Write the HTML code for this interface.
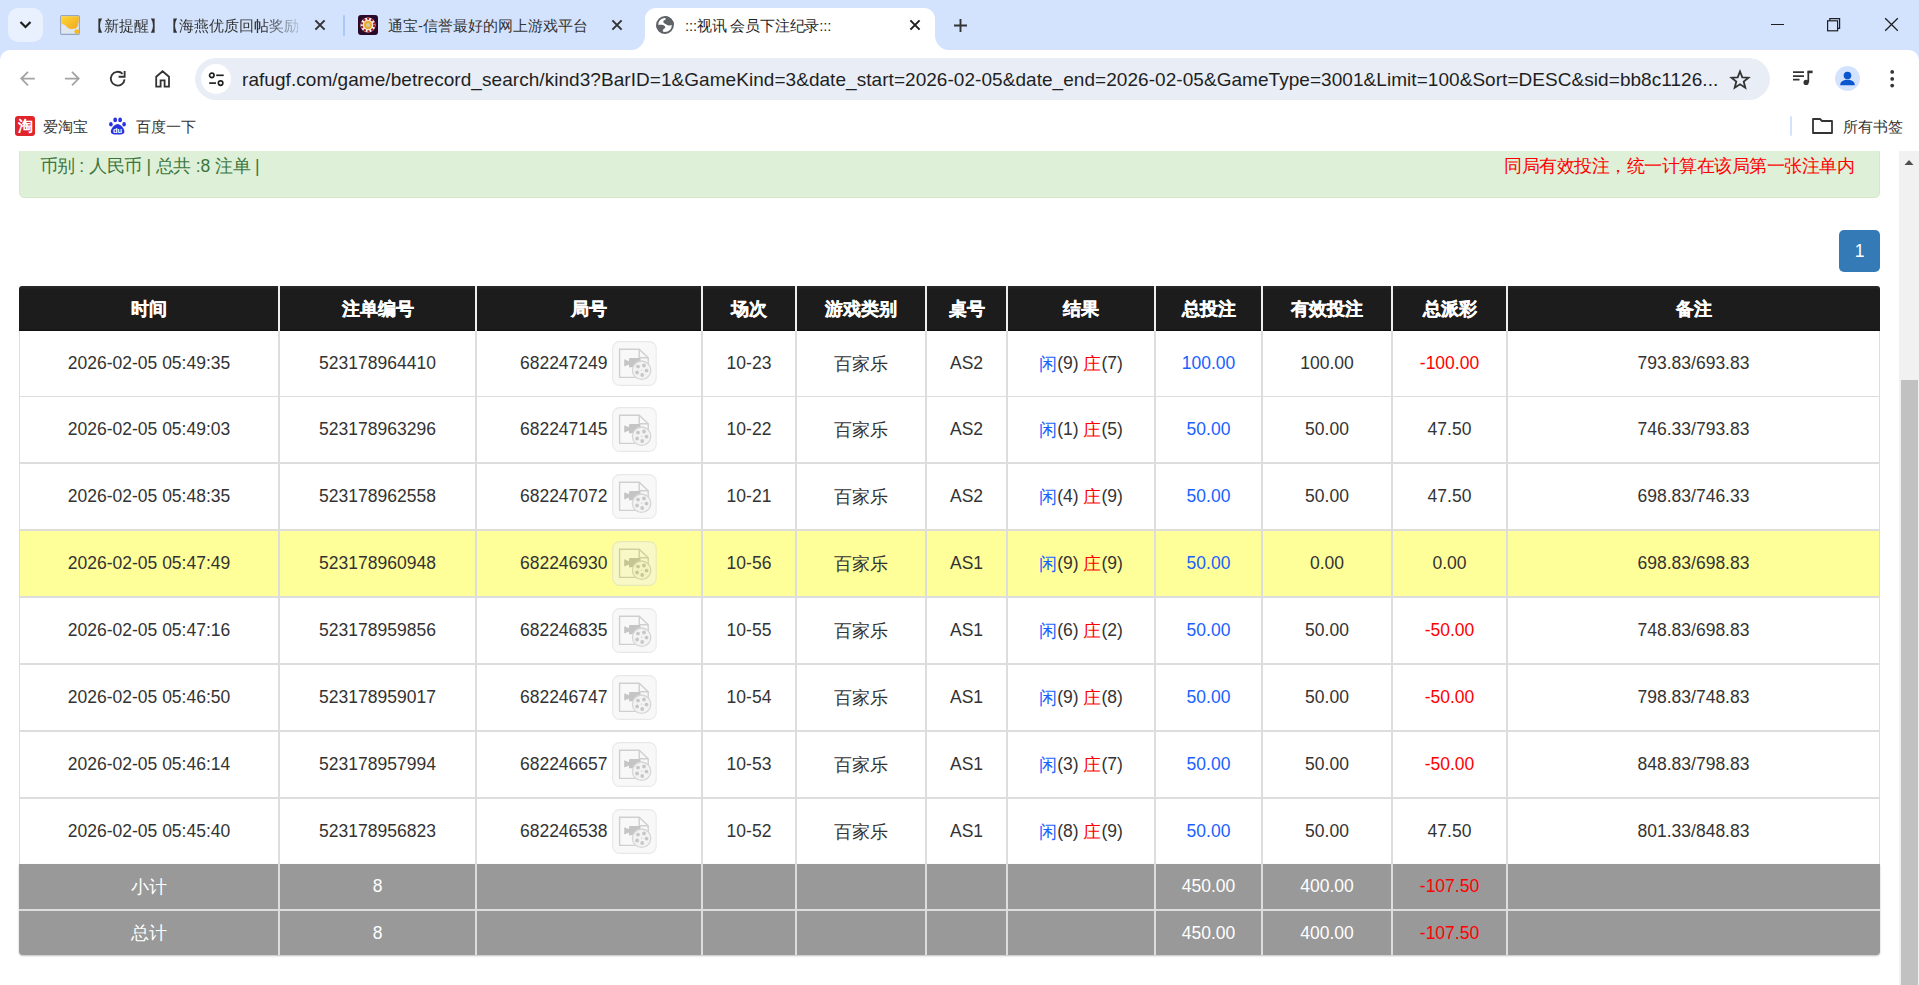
<!DOCTYPE html><html><head><meta charset="utf-8"><style>
*{margin:0;padding:0;box-sizing:border-box}
html,body{width:1919px;height:985px;overflow:hidden;background:#fff;font-family:"Liberation Sans", sans-serif;position:relative}
.a{position:absolute}
.c{position:absolute;display:flex;align-items:center;justify-content:center;white-space:nowrap}
.tab-title{font-size:15px;color:#1f1f1f}
.pg{font-size:17.5px;color:#333}
.b{color:#1a5fff}
.r{color:#f00}
.cj{letter-spacing:-0.5px}
</style></head><body><div class="a" style="left:0;top:0;width:1919px;height:62px;background:#d3e3fd"></div><div class="a" style="left:0;top:50px;width:1919px;height:101px;background:#fff;border-radius:10px 10px 0 0"></div>
<div class="a" style="left:8px;top:8px;width:35px;height:34px;border-radius:10px;background:#e9f1fe"></div>
<svg class="a" style="left:15px;top:14px" width="22" height="22" viewBox="0 0 22 22"><path d="M5.5 8 L10.5 13 L15.5 8" fill="none" stroke="#1f1f1f" stroke-width="2.2"/></svg>
<svg class="a" style="left:60px;top:15px" width="20" height="20" viewBox="0 0 20 20"><defs><linearGradient id="yg" x1="0" y1="0" x2="1" y2="1"><stop offset="0" stop-color="#fdd835"/><stop offset="1" stop-color="#f2a621"/></linearGradient></defs><rect x="0.6" y="0.6" width="18.8" height="18.8" rx="1.2" fill="#dfe6f0" stroke="#93a6c4" stroke-width="1.1"/><path d="M1.2 1.2H18.8V6.5C18.4 8 17.8 9.5 17.6 11C17 13.3 14 14.3 11 14C8 13.7 7 12 5.8 10.8C4.5 9.6 2.5 9.2 1.2 8Z" fill="url(#yg)"/><circle cx="16.8" cy="16.6" r="2.4" fill="#f7b81c"/></svg>
<div class="a tab-title" style="left:89px;top:16.5px;width:218px;overflow:hidden;white-space:nowrap;color:#333;-webkit-mask-image:linear-gradient(90deg,#000 80%,transparent 100%)">【新提醒】【海燕优质回帖奖励</div>
<svg class="a" style="left:314px;top:19px" width="12" height="12" viewBox="0 0 12 12"><path d="M1.4 1.4L10.6 10.6M10.6 1.4L1.4 10.6" stroke="#333" stroke-width="2"/></svg>
<div class="a" style="left:343px;top:15px;width:2px;height:21px;border-radius:1px;background:#a8c7fa"></div>
<svg class="a" style="left:358px;top:15px" width="20" height="20" viewBox="0 0 20 20"><rect x="0" y="0" width="20" height="20" rx="3" fill="#2a0a28"/><circle cx="10" cy="10" r="7.6" fill="#f4eee6"/><g stroke="#a11d2b" stroke-width="2.2" stroke-dasharray="2.2 1.8"><circle cx="10" cy="10" r="6.3" fill="none"/></g><circle cx="10" cy="10" r="4.2" fill="#e5ae2e"/><circle cx="10" cy="10" r="2" fill="#d9c9a8"/></svg>
<div class="a tab-title" style="left:388px;top:16.5px;white-space:nowrap;color:#333">通宝-信誉最好的网上游戏平台</div>
<svg class="a" style="left:611px;top:19px" width="12" height="12" viewBox="0 0 12 12"><path d="M1.4 1.4L10.6 10.6M10.6 1.4L1.4 10.6" stroke="#333" stroke-width="2"/></svg>
<svg class="a" style="left:630px;top:7.5px" width="335" height="43" viewBox="0 0 335 43"><path d="M0 42.5A15 15 0 0 0 15 27.5V11A11 11 0 0 1 26 0H294A11 11 0 0 1 305 11V27.5A15 15 0 0 0 320 42.5V43H0Z" fill="#fff"/></svg>
<svg class="a" style="left:652px;top:12px" width="26" height="26" viewBox="0 0 26 26"><defs><clipPath id="gc"><circle cx="13" cy="13" r="8.9"/></clipPath></defs><circle cx="13" cy="13" r="7.9" fill="#fff" stroke="#5f6368" stroke-width="2"/><g clip-path="url(#gc)" fill="#5f6368"><path d="M12.4 3.5C13.8 5.5 14.4 7.4 12.8 8C11 8.6 10.8 10.4 12.2 11.2C13.8 12 15 12.7 16.3 13.4C17.6 13.9 19.5 13.2 22.5 12.5L22.5 3.5Z"/><path d="M3.5 13C7 12.8 10 12.6 11.6 13.3C13.6 14.2 13.8 15.8 12.3 16.5C10.9 17.1 10.5 18.8 11 22.5L3.5 22.5Z"/></g></svg>
<div class="a tab-title" style="left:685px;top:16.5px;letter-spacing:-0.2px;white-space:nowrap;color:#1f1f1f">:::视讯 会员下注纪录:::</div>
<svg class="a" style="left:909px;top:19px" width="12" height="12" viewBox="0 0 12 12"><path d="M1.4 1.4L10.6 10.6M10.6 1.4L1.4 10.6" stroke="#1f1f1f" stroke-width="2"/></svg>
<svg class="a" style="left:953px;top:18px" width="15" height="15" viewBox="0 0 15 15"><path d="M7.5 1V14M1 7.5H14" stroke="#333" stroke-width="1.9"/></svg>
<div class="a" style="left:1771px;top:24px;width:13px;height:1.3px;background:#1f1f1f"></div>
<svg class="a" style="left:1825px;top:16px" width="17" height="17" viewBox="0 0 17 17"><rect x="2.6" y="4.8" width="10" height="10" fill="none" stroke="#1f1f1f" stroke-width="1.2"/><path d="M4.8 4.8V2.6H14.6V12.4H12.6" fill="none" stroke="#1f1f1f" stroke-width="1.2"/></svg>
<svg class="a" style="left:1882px;top:16px" width="18" height="18" viewBox="0 0 18 18"><path d="M3.2 2.2L15.8 14.8M15.8 2.2L3.2 14.8" stroke="#1f1f1f" stroke-width="1.3"/></svg>
<svg class="a" style="left:18px;top:68px" width="20" height="20" viewBox="0 0 20 20"><path d="M16.9 10.6H3.6M10 3.8L3.3 10.6L10 17.4" fill="none" stroke="#a4a4a4" stroke-width="1.8"/></svg>
<svg class="a" style="left:63px;top:68px" width="20" height="20" viewBox="0 0 20 20"><path d="M2 10.6H15.4M9 3.8L15.7 10.6L9 17.4" fill="none" stroke="#a4a4a4" stroke-width="1.8"/></svg>
<svg class="a" style="left:107px;top:69px" width="20" height="20" viewBox="0 0 20 20"><path d="M17.57 10.3A6.9 6.9 0 1 1 15.6 4.8" fill="none" stroke="#333" stroke-width="1.85"/><path d="M11.6 7.75H17.65V2" fill="none" stroke="#333" stroke-width="1.85"/></svg>
<svg class="a" style="left:152px;top:68px" width="22" height="22" viewBox="0 0 22 22"><path d="M4.2 18.6V8.7L10.6 3.2L17 8.7V18.6H12.6V12.4H8.6V18.6Z" fill="none" stroke="#333" stroke-width="1.8"/></svg>
<div class="a" style="left:195px;top:58px;width:1575px;height:42px;border-radius:21px;background:#e9eef6"></div>
<div class="a" style="left:201px;top:64px;width:30px;height:30px;border-radius:15px;background:#fff"></div>
<svg class="a" style="left:206px;top:69px" width="22" height="22" viewBox="0 0 22 22"><circle cx="5.8" cy="6.3" r="2.25" fill="none" stroke="#1f1f1f" stroke-width="1.65"/><path d="M10.2 6.3H17.7" stroke="#1f1f1f" stroke-width="1.65"/><circle cx="14.6" cy="14.1" r="2.25" fill="none" stroke="#1f1f1f" stroke-width="1.65"/><path d="M3.2 14.1H10" stroke="#1f1f1f" stroke-width="1.65"/></svg>
<div class="a" style="left:242px;top:69px;font-size:19px;letter-spacing:0.05px;color:#1f1f1f;white-space:nowrap">rafugf.com/game/betrecord_search/kind3?BarID=1&amp;GameKind=3&amp;date_start=2026-02-05&amp;date_end=2026-02-05&amp;GameType=3001&amp;Limit=100&amp;Sort=DESC&amp;sid=bb8c1126...</div>
<svg class="a" style="left:1729px;top:69px" width="22" height="22" viewBox="0 0 22 22"><path d="M11 2.5L13.3 8.3L19.5 8.7L14.7 12.6L16.3 18.7L11 15.3L5.7 18.7L7.3 12.6L2.5 8.7L8.7 8.3Z" fill="none" stroke="#333" stroke-width="1.8" stroke-linejoin="miter"/></svg>
<svg class="a" style="left:1792px;top:68px" width="24" height="20" viewBox="0 0 24 20"><path d="M1 4.2H12M1 8H12M1 11.7H7.5" stroke="#333" stroke-width="1.75"/><path d="M16.3 3.4V14.3" stroke="#333" stroke-width="1.75"/><path d="M15.5 2.6H20.6V5.2H15.5Z" fill="#333"/><circle cx="14.1" cy="14.4" r="2.6" fill="#333"/></svg>
<div class="a" style="left:1835px;top:66px;width:25px;height:25px;border-radius:13px;background:#d3e3fd"></div>
<svg class="a" style="left:1837px;top:68px" width="21" height="21" viewBox="0 0 21 21"><circle cx="10.5" cy="7.5" r="3.8" fill="#0b57d0"/><path d="M3.2 17.2C3.2 13.2 7 11.8 10.5 11.8C14 11.8 17.8 13.2 17.8 17.2Z" fill="#0b57d0"/></svg>
<svg class="a" style="left:1886px;top:68px" width="12" height="22" viewBox="0 0 12 22"><circle cx="6.2" cy="3.9" r="1.85" fill="#333"/><circle cx="6.2" cy="10.9" r="1.85" fill="#333"/><circle cx="6.2" cy="17.6" r="1.85" fill="#333"/></svg>
<div class="a" style="left:15px;top:116px;width:20px;height:20px;border-radius:3px;background:#e0242c;color:#fff;font-size:15px;font-weight:bold;line-height:20px;text-align:center">淘</div>
<div class="a tab-title" style="left:43px;top:117.5px;color:#333">爱淘宝</div>
<svg class="a" style="left:109px;top:116px" width="18" height="20" viewBox="0 0 18 20"><ellipse cx="6.2" cy="3.9" rx="1.9" ry="2.4" fill="#2932e1"/><ellipse cx="11.1" cy="3.9" rx="1.9" ry="2.4" fill="#2932e1"/><ellipse cx="1.9" cy="8.2" rx="1.8" ry="2.3" fill="#2932e1"/><ellipse cx="15.1" cy="8.2" rx="1.8" ry="2.3" fill="#2932e1"/><path d="M8.6 8C6 8 1.8 12.4 1.8 15.4C1.8 17.8 4 18.6 8.6 18.6C13.2 18.6 15.4 17.8 15.4 15.4C15.4 12.4 11.2 8 8.6 8Z" fill="#2932e1"/><text x="8.6" y="16.9" font-size="7.5" font-family="Liberation Sans" fill="#fff" text-anchor="middle" font-weight="bold">du</text></svg>
<div class="a tab-title" style="left:135.5px;top:117.5px;color:#333">百度一下</div>
<div class="a" style="left:1790px;top:116px;width:2px;height:20px;border-radius:1px;background:#d3e3fd"></div>
<svg class="a" style="left:1811px;top:116px" width="24" height="20" viewBox="0 0 24 20"><path d="M2 3H9L11 5H21V17H2Z" fill="none" stroke="#333" stroke-width="1.8" stroke-linejoin="round"/></svg>
<div class="a tab-title" style="left:1842.5px;top:117.5px;color:#333">所有书签</div>
<div class="a" style="left:0;top:151px;width:1899px;height:834px;overflow:hidden">
<div class="a" style="left:19px;top:-20px;width:1861px;height:67px;background:#dff0d8;border:1px solid #d6e9c6;border-radius:5px"></div>
<div class="a pg" style="left:39.5px;top:3px;color:#3c763d"><span class="cj">币别</span> : <span class="cj">人民币</span> | <span class="cj">总共</span> :8 <span class="cj">注单</span> |</div>
<div class="a pg cj" style="right:45px;top:3px;color:#f00">同局有效投注，统一计算在该局第一张注单内</div>
<div class="c" style="left:1839px;top:79px;width:41px;height:42px;border-radius:5px;background:#337ab7;color:#fff;font-size:17.5px">1</div>
</div>
<div class="a" style="left:19px;top:286px;width:1861px;height:45px;background:linear-gradient(#2a2a2a 0,#1c1c1c 4px,#1c1c1c 43px,#0e0e0e 45px);border-radius:3px 3px 0 0"></div>
<div class="c" style="left:20px;top:286px;width:258px;height:45px;color:#fff;font-weight:bold;font-size:17.5px;-webkit-text-stroke:0.35px #fff">时间</div>
<div class="c" style="left:280px;top:286px;width:195px;height:45px;color:#fff;font-weight:bold;font-size:17.5px;-webkit-text-stroke:0.35px #fff">注单编号</div>
<div class="c" style="left:477px;top:286px;width:224px;height:45px;color:#fff;font-weight:bold;font-size:17.5px;-webkit-text-stroke:0.35px #fff">局号</div>
<div class="c" style="left:703px;top:286px;width:92px;height:45px;color:#fff;font-weight:bold;font-size:17.5px;-webkit-text-stroke:0.35px #fff">场次</div>
<div class="c" style="left:797px;top:286px;width:128px;height:45px;color:#fff;font-weight:bold;font-size:17.5px;-webkit-text-stroke:0.35px #fff">游戏类别</div>
<div class="c" style="left:927px;top:286px;width:79px;height:45px;color:#fff;font-weight:bold;font-size:17.5px;-webkit-text-stroke:0.35px #fff">桌号</div>
<div class="c" style="left:1008px;top:286px;width:146px;height:45px;color:#fff;font-weight:bold;font-size:17.5px;-webkit-text-stroke:0.35px #fff">结果</div>
<div class="c" style="left:1156px;top:286px;width:105px;height:45px;color:#fff;font-weight:bold;font-size:17.5px;-webkit-text-stroke:0.35px #fff">总投注</div>
<div class="c" style="left:1263px;top:286px;width:128px;height:45px;color:#fff;font-weight:bold;font-size:17.5px;-webkit-text-stroke:0.35px #fff">有效投注</div>
<div class="c" style="left:1393px;top:286px;width:113px;height:45px;color:#fff;font-weight:bold;font-size:17.5px;-webkit-text-stroke:0.35px #fff">总派彩</div>
<div class="c" style="left:1508px;top:286px;width:371px;height:45px;color:#fff;font-weight:bold;font-size:17.5px;-webkit-text-stroke:0.35px #fff">备注</div>
<div class="a" style="left:19px;top:331px;width:1861px;height:65px;background:#fff"></div>
<div class="c pg" style="left:20px;top:331px;width:258px;height:65px;">2026-02-05 05:49:35</div>
<div class="c pg" style="left:280px;top:331px;width:195px;height:65px;">523178964410</div>
<div class="c pg" style="left:477px;top:331px;width:224px;height:65px;padding-right:1px">682247249<svg width="45" height="45" viewBox="0 0 45 45" style="margin-left:4.5px;flex:none;opacity:0.5"><rect x="0.6" y="0.6" width="43.6" height="43.8" rx="7" fill="#f3f3f3" stroke="#d3d3d3" stroke-width="1.1"/><path d="M23 36.4H7.6V8.2H27.2L36.2 16.8V23" fill="none" stroke="#a1a1a1" stroke-width="1.4"/><path d="M27.2 8.2V16.8H36.2" fill="none" stroke="#a1a1a1" stroke-width="1.4"/><path d="M17 18.2Q17 17 18.2 17H27.3Q28.5 17 28.5 18.2V26.3H17Z" fill="#8d8d8d"/><path d="M12.2 18.2L17.2 20.2V23.5L12.2 25.5Z" fill="#8d8d8d"/><circle cx="29.6" cy="29.2" r="9.2" fill="#e9e9e9" stroke="#adadad" stroke-width="1.3"/><circle cx="26" cy="25.6" r="1.9" fill="#919191"/><circle cx="32" cy="24.5" r="1.9" fill="#919191"/><circle cx="34.5" cy="29.6" r="1.9" fill="#919191"/><circle cx="30.2" cy="34" r="1.9" fill="#919191"/><circle cx="25.1" cy="31.5" r="1.9" fill="#919191"/><circle cx="29.6" cy="29.2" r="0.6" fill="#919191"/></svg></div>
<div class="c pg" style="left:703px;top:331px;width:92px;height:65px;">10-23</div>
<div class="c pg" style="left:797px;top:331px;width:128px;height:65px;">百家乐</div>
<div class="c pg" style="left:927px;top:331px;width:79px;height:65px;">AS2</div>
<div class="c pg" style="left:1008px;top:331px;width:146px;height:65px;"><span class="b">闲</span>(9)&nbsp;<span class="r">庄</span>(7)</div>
<div class="c pg" style="left:1156px;top:331px;width:105px;height:65px;color:#1a5fff">100.00</div>
<div class="c pg" style="left:1263px;top:331px;width:128px;height:65px;">100.00</div>
<div class="c pg" style="left:1393px;top:331px;width:113px;height:65px;color:#f00">-100.00</div>
<div class="c pg" style="left:1508px;top:331px;width:371px;height:65px;">793.83/693.83</div>
<div class="a" style="left:19px;top:396px;width:1861px;height:1px;background:#ddd"></div>
<div class="a" style="left:19px;top:397px;width:1861px;height:65px;background:#fff"></div>
<div class="c pg" style="left:20px;top:397px;width:258px;height:65px;">2026-02-05 05:49:03</div>
<div class="c pg" style="left:280px;top:397px;width:195px;height:65px;">523178963296</div>
<div class="c pg" style="left:477px;top:397px;width:224px;height:65px;padding-right:1px">682247145<svg width="45" height="45" viewBox="0 0 45 45" style="margin-left:4.5px;flex:none;opacity:0.5"><rect x="0.6" y="0.6" width="43.6" height="43.8" rx="7" fill="#f3f3f3" stroke="#d3d3d3" stroke-width="1.1"/><path d="M23 36.4H7.6V8.2H27.2L36.2 16.8V23" fill="none" stroke="#a1a1a1" stroke-width="1.4"/><path d="M27.2 8.2V16.8H36.2" fill="none" stroke="#a1a1a1" stroke-width="1.4"/><path d="M17 18.2Q17 17 18.2 17H27.3Q28.5 17 28.5 18.2V26.3H17Z" fill="#8d8d8d"/><path d="M12.2 18.2L17.2 20.2V23.5L12.2 25.5Z" fill="#8d8d8d"/><circle cx="29.6" cy="29.2" r="9.2" fill="#e9e9e9" stroke="#adadad" stroke-width="1.3"/><circle cx="26" cy="25.6" r="1.9" fill="#919191"/><circle cx="32" cy="24.5" r="1.9" fill="#919191"/><circle cx="34.5" cy="29.6" r="1.9" fill="#919191"/><circle cx="30.2" cy="34" r="1.9" fill="#919191"/><circle cx="25.1" cy="31.5" r="1.9" fill="#919191"/><circle cx="29.6" cy="29.2" r="0.6" fill="#919191"/></svg></div>
<div class="c pg" style="left:703px;top:397px;width:92px;height:65px;">10-22</div>
<div class="c pg" style="left:797px;top:397px;width:128px;height:65px;">百家乐</div>
<div class="c pg" style="left:927px;top:397px;width:79px;height:65px;">AS2</div>
<div class="c pg" style="left:1008px;top:397px;width:146px;height:65px;"><span class="b">闲</span>(1)&nbsp;<span class="r">庄</span>(5)</div>
<div class="c pg" style="left:1156px;top:397px;width:105px;height:65px;color:#1a5fff">50.00</div>
<div class="c pg" style="left:1263px;top:397px;width:128px;height:65px;">50.00</div>
<div class="c pg" style="left:1393px;top:397px;width:113px;height:65px;">47.50</div>
<div class="c pg" style="left:1508px;top:397px;width:371px;height:65px;">746.33/793.83</div>
<div class="a" style="left:19px;top:462px;width:1861px;height:2px;background:#ddd"></div>
<div class="a" style="left:19px;top:464px;width:1861px;height:65px;background:#fff"></div>
<div class="c pg" style="left:20px;top:464px;width:258px;height:65px;">2026-02-05 05:48:35</div>
<div class="c pg" style="left:280px;top:464px;width:195px;height:65px;">523178962558</div>
<div class="c pg" style="left:477px;top:464px;width:224px;height:65px;padding-right:1px">682247072<svg width="45" height="45" viewBox="0 0 45 45" style="margin-left:4.5px;flex:none;opacity:0.5"><rect x="0.6" y="0.6" width="43.6" height="43.8" rx="7" fill="#f3f3f3" stroke="#d3d3d3" stroke-width="1.1"/><path d="M23 36.4H7.6V8.2H27.2L36.2 16.8V23" fill="none" stroke="#a1a1a1" stroke-width="1.4"/><path d="M27.2 8.2V16.8H36.2" fill="none" stroke="#a1a1a1" stroke-width="1.4"/><path d="M17 18.2Q17 17 18.2 17H27.3Q28.5 17 28.5 18.2V26.3H17Z" fill="#8d8d8d"/><path d="M12.2 18.2L17.2 20.2V23.5L12.2 25.5Z" fill="#8d8d8d"/><circle cx="29.6" cy="29.2" r="9.2" fill="#e9e9e9" stroke="#adadad" stroke-width="1.3"/><circle cx="26" cy="25.6" r="1.9" fill="#919191"/><circle cx="32" cy="24.5" r="1.9" fill="#919191"/><circle cx="34.5" cy="29.6" r="1.9" fill="#919191"/><circle cx="30.2" cy="34" r="1.9" fill="#919191"/><circle cx="25.1" cy="31.5" r="1.9" fill="#919191"/><circle cx="29.6" cy="29.2" r="0.6" fill="#919191"/></svg></div>
<div class="c pg" style="left:703px;top:464px;width:92px;height:65px;">10-21</div>
<div class="c pg" style="left:797px;top:464px;width:128px;height:65px;">百家乐</div>
<div class="c pg" style="left:927px;top:464px;width:79px;height:65px;">AS2</div>
<div class="c pg" style="left:1008px;top:464px;width:146px;height:65px;"><span class="b">闲</span>(4)&nbsp;<span class="r">庄</span>(9)</div>
<div class="c pg" style="left:1156px;top:464px;width:105px;height:65px;color:#1a5fff">50.00</div>
<div class="c pg" style="left:1263px;top:464px;width:128px;height:65px;">50.00</div>
<div class="c pg" style="left:1393px;top:464px;width:113px;height:65px;">47.50</div>
<div class="c pg" style="left:1508px;top:464px;width:371px;height:65px;">698.83/746.33</div>
<div class="a" style="left:19px;top:529px;width:1861px;height:2px;background:#ddd"></div>
<div class="a" style="left:19px;top:531px;width:1861px;height:65px;background:#ffff99"></div>
<div class="c pg" style="left:20px;top:531px;width:258px;height:65px;">2026-02-05 05:47:49</div>
<div class="c pg" style="left:280px;top:531px;width:195px;height:65px;">523178960948</div>
<div class="c pg" style="left:477px;top:531px;width:224px;height:65px;padding-right:1px">682246930<svg width="45" height="45" viewBox="0 0 45 45" style="margin-left:4.5px;flex:none;opacity:0.5"><rect x="0.6" y="0.6" width="43.6" height="43.8" rx="7" fill="#f3f3f3" stroke="#d3d3d3" stroke-width="1.1"/><path d="M23 36.4H7.6V8.2H27.2L36.2 16.8V23" fill="none" stroke="#a1a1a1" stroke-width="1.4"/><path d="M27.2 8.2V16.8H36.2" fill="none" stroke="#a1a1a1" stroke-width="1.4"/><path d="M17 18.2Q17 17 18.2 17H27.3Q28.5 17 28.5 18.2V26.3H17Z" fill="#8d8d8d"/><path d="M12.2 18.2L17.2 20.2V23.5L12.2 25.5Z" fill="#8d8d8d"/><circle cx="29.6" cy="29.2" r="9.2" fill="#e9e9e9" stroke="#adadad" stroke-width="1.3"/><circle cx="26" cy="25.6" r="1.9" fill="#919191"/><circle cx="32" cy="24.5" r="1.9" fill="#919191"/><circle cx="34.5" cy="29.6" r="1.9" fill="#919191"/><circle cx="30.2" cy="34" r="1.9" fill="#919191"/><circle cx="25.1" cy="31.5" r="1.9" fill="#919191"/><circle cx="29.6" cy="29.2" r="0.6" fill="#919191"/></svg></div>
<div class="c pg" style="left:703px;top:531px;width:92px;height:65px;">10-56</div>
<div class="c pg" style="left:797px;top:531px;width:128px;height:65px;">百家乐</div>
<div class="c pg" style="left:927px;top:531px;width:79px;height:65px;">AS1</div>
<div class="c pg" style="left:1008px;top:531px;width:146px;height:65px;"><span class="b">闲</span>(9)&nbsp;<span class="r">庄</span>(9)</div>
<div class="c pg" style="left:1156px;top:531px;width:105px;height:65px;color:#1a5fff">50.00</div>
<div class="c pg" style="left:1263px;top:531px;width:128px;height:65px;">0.00</div>
<div class="c pg" style="left:1393px;top:531px;width:113px;height:65px;">0.00</div>
<div class="c pg" style="left:1508px;top:531px;width:371px;height:65px;">698.83/698.83</div>
<div class="a" style="left:19px;top:596px;width:1861px;height:2px;background:#ddd"></div>
<div class="a" style="left:19px;top:598px;width:1861px;height:65px;background:#fff"></div>
<div class="c pg" style="left:20px;top:598px;width:258px;height:65px;">2026-02-05 05:47:16</div>
<div class="c pg" style="left:280px;top:598px;width:195px;height:65px;">523178959856</div>
<div class="c pg" style="left:477px;top:598px;width:224px;height:65px;padding-right:1px">682246835<svg width="45" height="45" viewBox="0 0 45 45" style="margin-left:4.5px;flex:none;opacity:0.5"><rect x="0.6" y="0.6" width="43.6" height="43.8" rx="7" fill="#f3f3f3" stroke="#d3d3d3" stroke-width="1.1"/><path d="M23 36.4H7.6V8.2H27.2L36.2 16.8V23" fill="none" stroke="#a1a1a1" stroke-width="1.4"/><path d="M27.2 8.2V16.8H36.2" fill="none" stroke="#a1a1a1" stroke-width="1.4"/><path d="M17 18.2Q17 17 18.2 17H27.3Q28.5 17 28.5 18.2V26.3H17Z" fill="#8d8d8d"/><path d="M12.2 18.2L17.2 20.2V23.5L12.2 25.5Z" fill="#8d8d8d"/><circle cx="29.6" cy="29.2" r="9.2" fill="#e9e9e9" stroke="#adadad" stroke-width="1.3"/><circle cx="26" cy="25.6" r="1.9" fill="#919191"/><circle cx="32" cy="24.5" r="1.9" fill="#919191"/><circle cx="34.5" cy="29.6" r="1.9" fill="#919191"/><circle cx="30.2" cy="34" r="1.9" fill="#919191"/><circle cx="25.1" cy="31.5" r="1.9" fill="#919191"/><circle cx="29.6" cy="29.2" r="0.6" fill="#919191"/></svg></div>
<div class="c pg" style="left:703px;top:598px;width:92px;height:65px;">10-55</div>
<div class="c pg" style="left:797px;top:598px;width:128px;height:65px;">百家乐</div>
<div class="c pg" style="left:927px;top:598px;width:79px;height:65px;">AS1</div>
<div class="c pg" style="left:1008px;top:598px;width:146px;height:65px;"><span class="b">闲</span>(6)&nbsp;<span class="r">庄</span>(2)</div>
<div class="c pg" style="left:1156px;top:598px;width:105px;height:65px;color:#1a5fff">50.00</div>
<div class="c pg" style="left:1263px;top:598px;width:128px;height:65px;">50.00</div>
<div class="c pg" style="left:1393px;top:598px;width:113px;height:65px;color:#f00">-50.00</div>
<div class="c pg" style="left:1508px;top:598px;width:371px;height:65px;">748.83/698.83</div>
<div class="a" style="left:19px;top:663px;width:1861px;height:2px;background:#ddd"></div>
<div class="a" style="left:19px;top:665px;width:1861px;height:65px;background:#fff"></div>
<div class="c pg" style="left:20px;top:665px;width:258px;height:65px;">2026-02-05 05:46:50</div>
<div class="c pg" style="left:280px;top:665px;width:195px;height:65px;">523178959017</div>
<div class="c pg" style="left:477px;top:665px;width:224px;height:65px;padding-right:1px">682246747<svg width="45" height="45" viewBox="0 0 45 45" style="margin-left:4.5px;flex:none;opacity:0.5"><rect x="0.6" y="0.6" width="43.6" height="43.8" rx="7" fill="#f3f3f3" stroke="#d3d3d3" stroke-width="1.1"/><path d="M23 36.4H7.6V8.2H27.2L36.2 16.8V23" fill="none" stroke="#a1a1a1" stroke-width="1.4"/><path d="M27.2 8.2V16.8H36.2" fill="none" stroke="#a1a1a1" stroke-width="1.4"/><path d="M17 18.2Q17 17 18.2 17H27.3Q28.5 17 28.5 18.2V26.3H17Z" fill="#8d8d8d"/><path d="M12.2 18.2L17.2 20.2V23.5L12.2 25.5Z" fill="#8d8d8d"/><circle cx="29.6" cy="29.2" r="9.2" fill="#e9e9e9" stroke="#adadad" stroke-width="1.3"/><circle cx="26" cy="25.6" r="1.9" fill="#919191"/><circle cx="32" cy="24.5" r="1.9" fill="#919191"/><circle cx="34.5" cy="29.6" r="1.9" fill="#919191"/><circle cx="30.2" cy="34" r="1.9" fill="#919191"/><circle cx="25.1" cy="31.5" r="1.9" fill="#919191"/><circle cx="29.6" cy="29.2" r="0.6" fill="#919191"/></svg></div>
<div class="c pg" style="left:703px;top:665px;width:92px;height:65px;">10-54</div>
<div class="c pg" style="left:797px;top:665px;width:128px;height:65px;">百家乐</div>
<div class="c pg" style="left:927px;top:665px;width:79px;height:65px;">AS1</div>
<div class="c pg" style="left:1008px;top:665px;width:146px;height:65px;"><span class="b">闲</span>(9)&nbsp;<span class="r">庄</span>(8)</div>
<div class="c pg" style="left:1156px;top:665px;width:105px;height:65px;color:#1a5fff">50.00</div>
<div class="c pg" style="left:1263px;top:665px;width:128px;height:65px;">50.00</div>
<div class="c pg" style="left:1393px;top:665px;width:113px;height:65px;color:#f00">-50.00</div>
<div class="c pg" style="left:1508px;top:665px;width:371px;height:65px;">798.83/748.83</div>
<div class="a" style="left:19px;top:730px;width:1861px;height:2px;background:#ddd"></div>
<div class="a" style="left:19px;top:732px;width:1861px;height:65px;background:#fff"></div>
<div class="c pg" style="left:20px;top:732px;width:258px;height:65px;">2026-02-05 05:46:14</div>
<div class="c pg" style="left:280px;top:732px;width:195px;height:65px;">523178957994</div>
<div class="c pg" style="left:477px;top:732px;width:224px;height:65px;padding-right:1px">682246657<svg width="45" height="45" viewBox="0 0 45 45" style="margin-left:4.5px;flex:none;opacity:0.5"><rect x="0.6" y="0.6" width="43.6" height="43.8" rx="7" fill="#f3f3f3" stroke="#d3d3d3" stroke-width="1.1"/><path d="M23 36.4H7.6V8.2H27.2L36.2 16.8V23" fill="none" stroke="#a1a1a1" stroke-width="1.4"/><path d="M27.2 8.2V16.8H36.2" fill="none" stroke="#a1a1a1" stroke-width="1.4"/><path d="M17 18.2Q17 17 18.2 17H27.3Q28.5 17 28.5 18.2V26.3H17Z" fill="#8d8d8d"/><path d="M12.2 18.2L17.2 20.2V23.5L12.2 25.5Z" fill="#8d8d8d"/><circle cx="29.6" cy="29.2" r="9.2" fill="#e9e9e9" stroke="#adadad" stroke-width="1.3"/><circle cx="26" cy="25.6" r="1.9" fill="#919191"/><circle cx="32" cy="24.5" r="1.9" fill="#919191"/><circle cx="34.5" cy="29.6" r="1.9" fill="#919191"/><circle cx="30.2" cy="34" r="1.9" fill="#919191"/><circle cx="25.1" cy="31.5" r="1.9" fill="#919191"/><circle cx="29.6" cy="29.2" r="0.6" fill="#919191"/></svg></div>
<div class="c pg" style="left:703px;top:732px;width:92px;height:65px;">10-53</div>
<div class="c pg" style="left:797px;top:732px;width:128px;height:65px;">百家乐</div>
<div class="c pg" style="left:927px;top:732px;width:79px;height:65px;">AS1</div>
<div class="c pg" style="left:1008px;top:732px;width:146px;height:65px;"><span class="b">闲</span>(3)&nbsp;<span class="r">庄</span>(7)</div>
<div class="c pg" style="left:1156px;top:732px;width:105px;height:65px;color:#1a5fff">50.00</div>
<div class="c pg" style="left:1263px;top:732px;width:128px;height:65px;">50.00</div>
<div class="c pg" style="left:1393px;top:732px;width:113px;height:65px;color:#f00">-50.00</div>
<div class="c pg" style="left:1508px;top:732px;width:371px;height:65px;">848.83/798.83</div>
<div class="a" style="left:19px;top:797px;width:1861px;height:2px;background:#ddd"></div>
<div class="a" style="left:19px;top:799px;width:1861px;height:65px;background:#fff"></div>
<div class="c pg" style="left:20px;top:799px;width:258px;height:65px;">2026-02-05 05:45:40</div>
<div class="c pg" style="left:280px;top:799px;width:195px;height:65px;">523178956823</div>
<div class="c pg" style="left:477px;top:799px;width:224px;height:65px;padding-right:1px">682246538<svg width="45" height="45" viewBox="0 0 45 45" style="margin-left:4.5px;flex:none;opacity:0.5"><rect x="0.6" y="0.6" width="43.6" height="43.8" rx="7" fill="#f3f3f3" stroke="#d3d3d3" stroke-width="1.1"/><path d="M23 36.4H7.6V8.2H27.2L36.2 16.8V23" fill="none" stroke="#a1a1a1" stroke-width="1.4"/><path d="M27.2 8.2V16.8H36.2" fill="none" stroke="#a1a1a1" stroke-width="1.4"/><path d="M17 18.2Q17 17 18.2 17H27.3Q28.5 17 28.5 18.2V26.3H17Z" fill="#8d8d8d"/><path d="M12.2 18.2L17.2 20.2V23.5L12.2 25.5Z" fill="#8d8d8d"/><circle cx="29.6" cy="29.2" r="9.2" fill="#e9e9e9" stroke="#adadad" stroke-width="1.3"/><circle cx="26" cy="25.6" r="1.9" fill="#919191"/><circle cx="32" cy="24.5" r="1.9" fill="#919191"/><circle cx="34.5" cy="29.6" r="1.9" fill="#919191"/><circle cx="30.2" cy="34" r="1.9" fill="#919191"/><circle cx="25.1" cy="31.5" r="1.9" fill="#919191"/><circle cx="29.6" cy="29.2" r="0.6" fill="#919191"/></svg></div>
<div class="c pg" style="left:703px;top:799px;width:92px;height:65px;">10-52</div>
<div class="c pg" style="left:797px;top:799px;width:128px;height:65px;">百家乐</div>
<div class="c pg" style="left:927px;top:799px;width:79px;height:65px;">AS1</div>
<div class="c pg" style="left:1008px;top:799px;width:146px;height:65px;"><span class="b">闲</span>(8)&nbsp;<span class="r">庄</span>(9)</div>
<div class="c pg" style="left:1156px;top:799px;width:105px;height:65px;color:#1a5fff">50.00</div>
<div class="c pg" style="left:1263px;top:799px;width:128px;height:65px;">50.00</div>
<div class="c pg" style="left:1393px;top:799px;width:113px;height:65px;">47.50</div>
<div class="c pg" style="left:1508px;top:799px;width:371px;height:65px;">801.33/848.83</div>
<div class="a" style="left:19px;top:864px;width:1861px;height:91px;background:#999;border-radius:0 0 4px 4px;box-shadow:0 1px 2px rgba(0,0,0,0.25)"></div>
<div class="a" style="left:19px;top:909px;width:1861px;height:2px;background:#ddd"></div>
<div class="c pg" style="left:20px;top:864px;width:258px;height:45px;color:#fff">小计</div>
<div class="c pg" style="left:280px;top:864px;width:195px;height:45px;color:#fff">8</div>
<div class="c pg" style="left:1156px;top:864px;width:105px;height:45px;color:#fff">450.00</div>
<div class="c pg" style="left:1263px;top:864px;width:128px;height:45px;color:#fff">400.00</div>
<div class="c pg" style="left:1393px;top:864px;width:113px;height:45px;color:#f00">-107.50</div>
<div class="c pg" style="left:20px;top:911px;width:258px;height:44px;color:#fff">总计</div>
<div class="c pg" style="left:280px;top:911px;width:195px;height:44px;color:#fff">8</div>
<div class="c pg" style="left:1156px;top:911px;width:105px;height:44px;color:#fff">450.00</div>
<div class="c pg" style="left:1263px;top:911px;width:128px;height:44px;color:#fff">400.00</div>
<div class="c pg" style="left:1393px;top:911px;width:113px;height:44px;color:#f00">-107.50</div>
<div class="a" style="left:19px;top:331px;width:1px;height:533px;background:#ddd"></div>
<div class="a" style="left:278px;top:286px;width:2px;height:45px;background:#eee"></div>
<div class="a" style="left:278px;top:331px;width:2px;height:624px;background:#ddd"></div>
<div class="a" style="left:475px;top:286px;width:2px;height:45px;background:#eee"></div>
<div class="a" style="left:475px;top:331px;width:2px;height:624px;background:#ddd"></div>
<div class="a" style="left:701px;top:286px;width:2px;height:45px;background:#eee"></div>
<div class="a" style="left:701px;top:331px;width:2px;height:624px;background:#ddd"></div>
<div class="a" style="left:795px;top:286px;width:2px;height:45px;background:#eee"></div>
<div class="a" style="left:795px;top:331px;width:2px;height:624px;background:#ddd"></div>
<div class="a" style="left:925px;top:286px;width:2px;height:45px;background:#eee"></div>
<div class="a" style="left:925px;top:331px;width:2px;height:624px;background:#ddd"></div>
<div class="a" style="left:1006px;top:286px;width:2px;height:45px;background:#eee"></div>
<div class="a" style="left:1006px;top:331px;width:2px;height:624px;background:#ddd"></div>
<div class="a" style="left:1154px;top:286px;width:2px;height:45px;background:#eee"></div>
<div class="a" style="left:1154px;top:331px;width:2px;height:624px;background:#ddd"></div>
<div class="a" style="left:1261px;top:286px;width:2px;height:45px;background:#eee"></div>
<div class="a" style="left:1261px;top:331px;width:2px;height:624px;background:#ddd"></div>
<div class="a" style="left:1391px;top:286px;width:2px;height:45px;background:#eee"></div>
<div class="a" style="left:1391px;top:331px;width:2px;height:624px;background:#ddd"></div>
<div class="a" style="left:1506px;top:286px;width:2px;height:45px;background:#eee"></div>
<div class="a" style="left:1506px;top:331px;width:2px;height:624px;background:#ddd"></div>
<div class="a" style="left:1879px;top:331px;width:1px;height:533px;background:#ddd"></div>
<div class="a" style="left:1899px;top:151px;width:20px;height:834px;background:#f1f1f1"></div>
<svg class="a" style="left:1903px;top:157px" width="12" height="10" viewBox="0 0 12 10"><path d="M1.5 8H10.5L6 3Z" fill="#505050"/></svg>
<div class="a" style="left:1901px;top:380px;width:17px;height:605px;background:#c1c1c1"></div></body></html>
